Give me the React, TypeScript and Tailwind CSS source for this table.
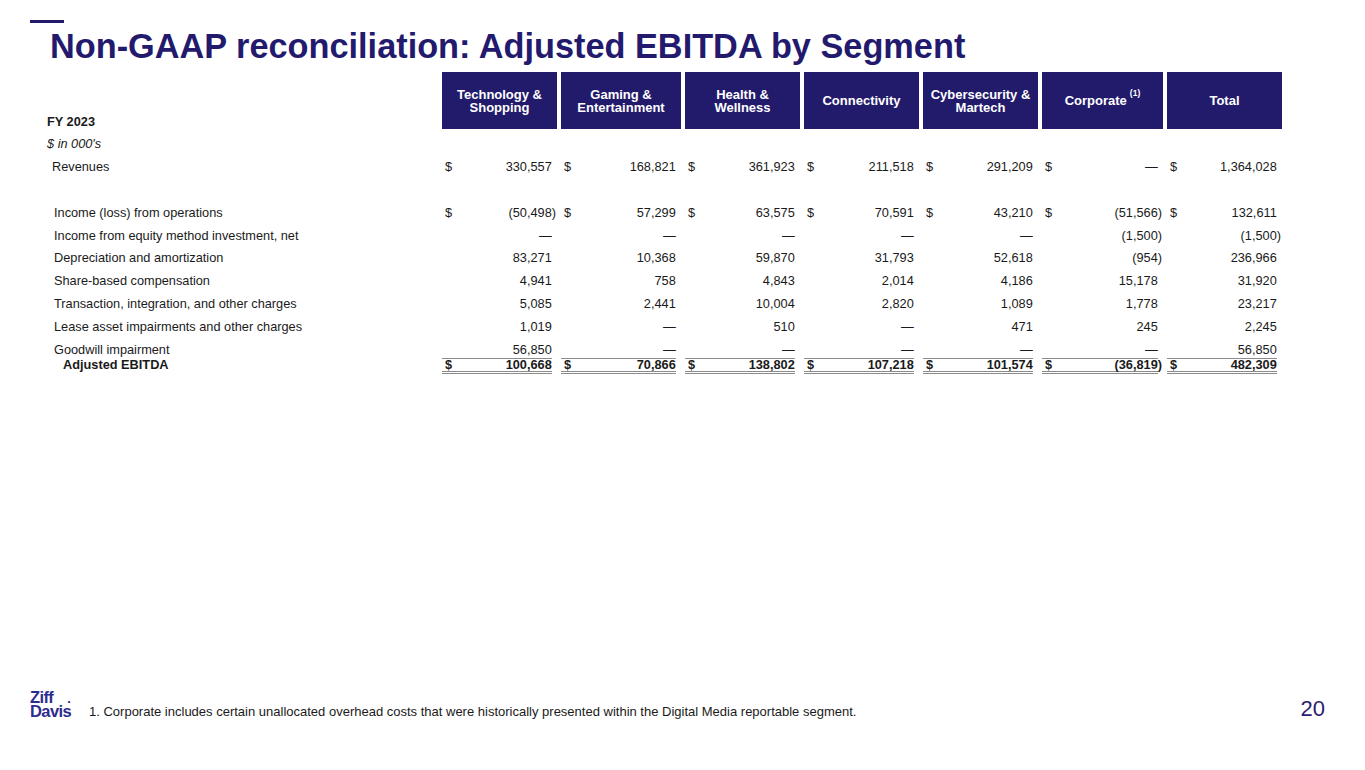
import React from "react";

const NAVY = "bg-[#221a6b]";

const COLS = [
  { w: "w-[115px]", title: ["Technology &", "Shopping"] },
  { w: "w-[120px]", title: ["Gaming &", "Entertainment"] },
  { w: "w-[115px]", title: ["Health &", "Wellness"] },
  { w: "w-[115px]", title: ["Connectivity"] },
  { w: "w-[115px]", title: ["Cybersecurity &", "Martech"] },
  { w: "w-[121px]", title: ["Corporate"], note: "(1)" },
  { w: "w-[115px]", title: ["Total"] },
];

type Row = { label: string; values: string[]; dollar?: boolean; indent?: string };

const ROWS: Row[] = [
  {
    label: "Income (loss) from operations",
    values: ["(50,498)", "57,299", "63,575", "70,591", "43,210", "(51,566)", "132,611"],
    dollar: true,
  },
  {
    label: "Income from equity method investment, net",
    values: ["—", "—", "—", "—", "—", "(1,500)", "(1,500)"],
  },
  {
    label: "Depreciation and amortization",
    values: ["83,271", "10,368", "59,870", "31,793", "52,618", "(954)", "236,966"],
  },
  {
    label: "Share-based compensation",
    values: ["4,941", "758", "4,843", "2,014", "4,186", "15,178", "31,920"],
  },
  {
    label: "Transaction, integration, and other charges",
    values: ["5,085", "2,441", "10,004", "2,820", "1,089", "1,778", "23,217"],
  },
  {
    label: "Lease asset impairments and other charges",
    values: ["1,019", "—", "510", "—", "471", "245", "2,245"],
  },
];

const REVENUES = ["330,557", "168,821", "361,923", "211,518", "291,209", "—", "1,364,028"];
const GOODWILL = ["56,850", "—", "—", "—", "—", "—", "56,850"];
const EBITDA = ["100,668", "70,866", "138,802", "107,218", "101,574", "(36,819)", "482,309"];

// accounting style: positives keep the room of a closing paren
function Value({ v }: { v: string }) {
  const neg = v.startsWith("(");
  return (
    <span className="-mr-[4px]">
      {v}
      {!neg && <span className="invisible">)</span>}
    </span>
  );
}

function Cells({
  values,
  dollar,
  cellClass = "",
}: {
  values: string[];
  dollar?: boolean;
  cellClass?: string;
}) {
  return (
    <>
      {values.map((v, i) => (
        <div key={i} className={`${COLS[i].w} shrink-0`}>
          <div className={`mr-[5px] flex h-full justify-between pl-[3px] ${cellClass}`}>
            <span>{dollar ? "$" : ""}</span>
            <Value v={v} />
          </div>
        </div>
      ))}
    </>
  );
}

function DataRow({ label, values, dollar, indent = "pl-[7px]" }: Row) {
  return (
    <div className="flex h-[22.8px] items-center gap-x-[4px]">
      <div className={`w-[391px] shrink-0 ${indent}`}>{label}</div>
      <Cells values={values} dollar={dollar} />
    </div>
  );
}

export default function App() {
  return (
    <div
      className="relative flex h-[770px] w-[1365px] flex-col overflow-hidden bg-white text-[#1a1a1a]"
      style={{ fontFamily: '"Liberation Sans", Arial, sans-serif' }}
    >
      {/* accent + title */}
      <div className="ml-[30px] mt-[20px] h-[3px] w-[34px] bg-[#221a6b]" />
      <h1 className="ml-[50px] mt-[5.5px] text-[34.3px] font-bold leading-[34px] text-[#231a6e]">
        Non-GAAP reconciliation: Adjusted EBITDA by Segment
      </h1>

      {/* table */}
      <div className="ml-[47px] mt-[9.5px] text-[12.75px] leading-[15px]">
        <div className="flex h-[57px] gap-x-[4px]">
          <div className="flex w-[391px] shrink-0 items-end font-bold">FY 2023</div>
          {COLS.map((c, i) => (
            <div
              key={i}
              className={`${c.w} ${NAVY} flex shrink-0 flex-col items-center justify-center text-center text-[13px] font-bold leading-[13px] text-white`}
            >
              {c.title.map((t, j) => (
                <div key={j}>
                  {t}
                  {c.note && (
                    <sup className="relative -top-[1px] ml-[3px] align-top text-[8.5px] font-bold">
                      {c.note}
                    </sup>
                  )}
                </div>
              ))}
            </div>
          ))}
        </div>

        <div className="mt-[3.6px] flex h-[22.8px] items-center italic">$ in 000's</div>
        <DataRow label="Revenues" values={REVENUES} dollar indent="pl-[5px]" />
        <div className="h-[22.8px]" />
        {ROWS.map((r) => (
          <DataRow key={r.label} {...r} />
        ))}

        {/* goodwill with single rule */}
        <div className="flex h-[21px] gap-x-[4px]">
          <div className="w-[391px] shrink-0 pl-[7px] pt-[4.5px]">Goodwill impairment</div>
          <Cells values={GOODWILL} cellClass="border-b border-[#8c8c8c] pt-[4.5px]" />
        </div>

        {/* total with double rule */}
        <div className="flex h-[15px] gap-x-[4px] font-bold leading-[12px]">
          <div className="w-[391px] shrink-0 pl-[16px]">Adjusted EBITDA</div>
          <Cells values={EBITDA} dollar cellClass="border-b-[3px] border-double border-[#8c8c8c] items-center" />
        </div>
      </div>

      {/* footer */}
      <div className="mt-auto flex items-end pb-[50px] pl-[30px] pr-[40px]">
        <div className="mb-[3px] flex w-[59px] shrink-0 flex-col gap-y-[1px] text-[16.5px] font-bold leading-[12.5px] tracking-[-0.6px] text-[#2e2c8e]">
          <div className="h-[12.5px]">
            Ziff<span className="ml-[14px] text-[13px]">.</span>
          </div>
          <div className="h-[12.5px]">Davis</div>
        </div>
        <p className="mb-[1.5px] text-[13px] leading-[15px]">
          1. Corporate includes certain unallocated overhead costs that were historically presented
          within the Digital Media reportable segment.
        </p>
        <div className="ml-auto text-[22px] leading-[22px] text-[#2a2270]">20</div>
      </div>
    </div>
  );
}
